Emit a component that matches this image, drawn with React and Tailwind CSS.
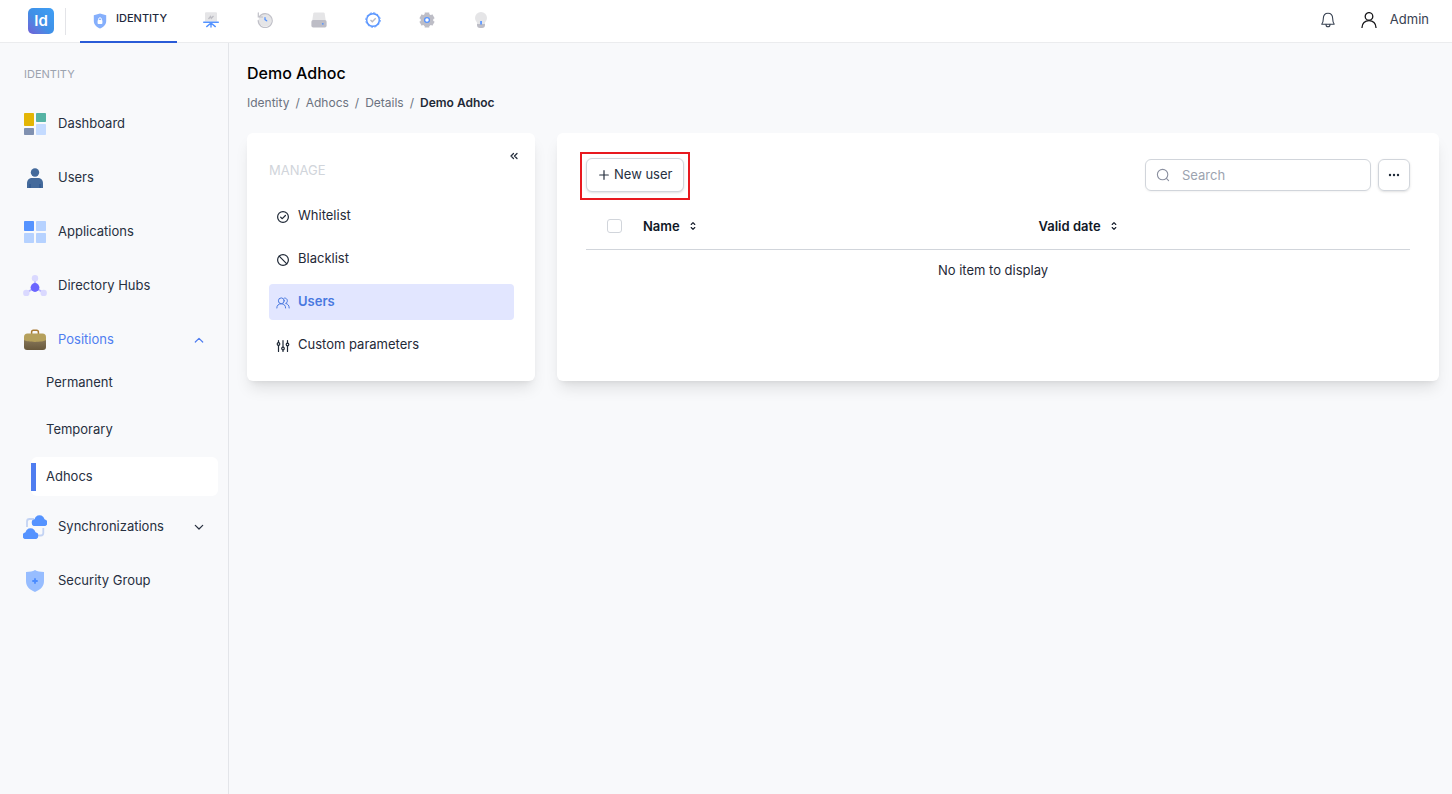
import React from "react";

const stroke = {
  fill: "none",
  stroke: "currentColor",
  strokeLinecap: "round",
  strokeLinejoin: "round",
};

function Logo() {
  return (
    <span className="flex size-[26px] items-center justify-center rounded-[5px] bg-linear-to-tr from-[#6d5fd6] via-[#3f8fe6] via-45% to-[#3f9ff5] text-[15px] font-semibold text-white">
      Id
    </span>
  );
}

function ShieldLockIcon() {
  return (
    <svg width="16" height="16" viewBox="0 0 16 16">
      <path d="M8 .5 L14.200 2.200 V8 C14.200 11.600 11.500 14.200 8 15.600 C4.500 14.200 1.800 11.600 1.800 8 V2.200 Z" fill="#85affc" />
      <rect x="5.600" y="7" width="4.800" height="4" rx=".8" fill="#fff" />
      <path d="M6.600 7.200 V6.200 a1.400 1.400 0 0 1 2.800 0 V7.200" fill="none" stroke="#fff" strokeWidth="1" />
    </svg>
  );
}

function BoardIcon() {
  return (
    <svg width="16" height="16" viewBox="0 0 16 16">
      <path d="M2 1.200 a1 1 0 0 1 1-1 H13 a1 1 0 0 1 1 1 V9.500 H2 Z" fill="#e5e5e7" />
      <path d="M5.500 7 L7.500 4.500 L8.300 6.300 L10.500 4" fill="none" stroke="#bdbdc4" strokeWidth="1.300" />
      <path d="M.7 10.200 H15.300 M8 10.500 V15 M8 11 L3.700 14.600 M8 11 L12.300 14.600" fill="none" stroke="#5593ff" strokeWidth="1.400" strokeLinecap="round" />
    </svg>
  );
}

function HistoryIcon() {
  return (
    <svg width="16" height="16" viewBox="0 0 16 16">
      <circle cx="8.200" cy="8.200" r="6.500" fill="#e5e5e7" />
      <path d="M2.300 4.800 A7 7 0 1 1 1.200 8.400" fill="none" stroke="#c0c0c8" strokeWidth="1.200" strokeLinecap="round" />
      <path d="M1.300 .9 V5 H5.500" fill="none" stroke="#c0c0c8" strokeWidth="1.200" strokeLinecap="round" />
      <path d="M8 5.600 V7.600 L9.700 8.800" fill="none" stroke="#5593ff" strokeWidth="1.300" strokeLinecap="round" />
    </svg>
  );
}

function DriveIcon() {
  return (
    <svg width="16" height="16" viewBox="0 0 16 16">
      <path d="M2.300 1.600 a1.300 1.300 0 0 1 1.200-1.100 H12.500 a1.300 1.300 0 0 1 1.200 1.100 L14.800 9 H1.200 Z" fill="#e5e5e7" />
      <rect x=".4" y="8" width="15.200" height="7.600" rx="1.800" fill="#bdbdc6" />
      <circle cx="11.800" cy="11.800" r=".9" fill="#5593ff" />
    </svg>
  );
}

function VerifiedIcon() {
  return (
    <svg width="16" height="16" viewBox="0 0 16 16">
      <circle cx="8" cy="8" r="6.300" fill="none" stroke="#5593ff" strokeWidth="1.400" />
      <circle cx="8" cy="8" r="7.200" fill="none" stroke="#5593ff" strokeWidth="1" strokeDasharray="2.270 1.500" />
      <path d="M5.500 8 L7.300 9.800 L10.700 6.300" fill="none" stroke="#b9b9c2" strokeWidth="1.400" />
    </svg>
  );
}

function GearIcon() {
  return (
    <svg width="16" height="16" viewBox="0 0 16 16">
      <circle cx="8" cy="8" r="6.300" fill="#bdbdc6" />
      <path
        d="M8 .5V15.500 M1.500 4.250 L14.500 11.750 M14.500 4.250 L1.500 11.750"
        stroke="#bdbdc6"
        strokeWidth="4.600"
      />
      <circle cx="8" cy="8" r="2.400" fill="#fff" stroke="#5593ff" strokeWidth="1.300" />
    </svg>
  );
}

function BulbIcon() {
  return (
    <svg width="16" height="16" viewBox="0 0 16 16">
      <circle cx="8" cy="6" r="6" fill="#e5e5e7" />
      <path d="M4 8 H12 V13 H4 Z" fill="#e5e5e7" />
      <path d="M4 12 H12 V13 a3 3 0 0 1 -3 3 H7 a3 3 0 0 1 -3 -3 Z" fill="#bdbdc6" />
      <rect x="7.200" y="9" width="1.700" height="3.500" fill="#5593ff" />
    </svg>
  );
}

function BellIcon() {
  return (
    <svg width="16" height="16" viewBox="0 0 16 16" {...stroke} strokeWidth="1.100">
      <path d="M1.800 12.200 C3.200 10.800 3.200 9 3.300 6.600 C3.400 3.200 5.400 1.300 8 1.300 C10.600 1.300 12.600 3.200 12.700 6.600 C12.800 9 12.800 10.800 14.200 12.200 Z" />
      <path d="M6 12.400 C6 15.500 10 15.500 10 12.400" />
    </svg>
  );
}

function PersonIcon() {
  return (
    <svg width="16" height="16" viewBox="0 0 16 16" {...stroke} strokeWidth="1.300">
      <circle cx="8" cy="4.400" r="3.800" />
      <path d="M1 15.600 C1 11.400 4 8.600 8 8.600 C12 8.600 15 11.400 15 15.600" />
    </svg>
  );
}

function DashboardIcon() {
  return (
    <svg width="24" height="24" viewBox="0 0 24 24">
      <rect x="1" y="1" width="10" height="13" rx=".8" fill="#e3b505" />
      <rect x="13" y="1" width="10" height="9" rx=".8" fill="#56b3a4" />
      <rect x="1" y="16" width="10" height="7" rx=".8" fill="#8091b0" />
      <rect x="13" y="12" width="10" height="11" rx=".8" fill="#c4dbff" />
    </svg>
  );
}

function UserIcon() {
  return (
    <svg width="24" height="24" viewBox="0 0 24 24">
      <circle cx="12" cy="6.500" r="4.200" fill="#446a9b" />
      <path d="M4 22 V17.500 C4 13.500 6.500 12 9 12 H15 C17.500 12 20 13.500 20 17.500 V22 Z" fill="#446a9b" />
      <path d="M7 18 V22 M17 18 V22" stroke="#2c5590" strokeWidth="1.200" />
    </svg>
  );
}

function AppsIcon() {
  return (
    <svg width="24" height="24" viewBox="0 0 24 24">
      <rect x="1" y="1" width="10" height="10" rx=".8" fill="#5593ff" />
      <rect x="13" y="1" width="10" height="10" rx=".8" fill="#b6d2ff" />
      <rect x="1" y="13" width="10" height="10" rx=".8" fill="#b6d2ff" />
      <rect x="13" y="13" width="10" height="10" rx=".8" fill="#b6d2ff" />
    </svg>
  );
}

function HubsIcon() {
  return (
    <svg width="24" height="24" viewBox="0 0 24 24">
      <path d="M12 4 V13.500 M12 13.500 L3.500 18.800 M12 13.500 L20.500 18.800" stroke="#b9b6ff" strokeWidth="1.800" />
      <circle cx="12" cy="4.200" r="3.200" fill="#dad9ff" />
      <circle cx="3.300" cy="18.900" r="3.200" fill="#dad9ff" />
      <circle cx="20.700" cy="18.900" r="3.200" fill="#dad9ff" />
      <circle cx="12" cy="13.500" r="4.400" fill="#6b66ff" />
    </svg>
  );
}

function BriefcaseIcon() {
  return (
    <svg width="24" height="24" viewBox="0 0 24 24">
      <defs>
        <linearGradient id="case-body" x1="0" y1="0" x2="0" y2="1">
          <stop offset="0" stopColor="#8a7a5c" />
          <stop offset="1" stopColor="#68583c" />
        </linearGradient>
      </defs>
      <path d="M8.600 6 V4 a1.800 1.800 0 0 1 1.800-1.800 h3.200 a1.800 1.800 0 0 1 1.800 1.800 V6" fill="none" stroke="#a97b33" strokeWidth="1.500" />
      <path d="M1 10 H23 V19 a3 3 0 0 1 -3 3 H4 a3 3 0 0 1 -3 -3 Z" fill="url(#case-body)" />
      <path d="M1 12 V9 a3.500 3.500 0 0 1 3.500-3.500 H19.500 a3.500 3.500 0 0 1 3.500 3.500 V12 C20 14.500 4 14.500 1 12 Z" fill="#b5a05c" />
    </svg>
  );
}

function CloudSyncIcon() {
  return (
    <svg width="24" height="24" viewBox="0 0 24 24">
      <path d="M4 12 V6.500 a2.500 2.500 0 0 1 2.500-2.500 H11 M20.300 13 V18 a2.500 2.500 0 0 1 -2.500 2.500 H14" fill="none" stroke="#c3d3f3" strokeWidth="1.800" />
      <g fill="#5593ff">
        <path d="M12.200 11 a3.200 3.200 0 0 1 -.5 -6.400 a5 5 0 0 1 9.600 0 a3.200 3.200 0 0 1 -.5 6.400 Z" />
        <circle cx="12.200" cy="7.800" r="3.200" />
        <circle cx="20.800" cy="7.800" r="3.200" />
        <circle cx="16.500" cy="5.200" r="5" />
        <path d="M3.200 24 a3.200 3.200 0 0 1 -.5 -6.400 a5 5 0 0 1 9.600 0 a3.200 3.200 0 0 1 -.5 6.400 Z" />
        <circle cx="3.200" cy="20.800" r="3.200" />
        <circle cx="11.800" cy="20.800" r="3.200" />
        <circle cx="7.500" cy="18.200" r="5" />
      </g>
    </svg>
  );
}

function ShieldPlusIcon() {
  return (
    <svg width="24" height="24" viewBox="0 0 24 24">
      <path d="M12 1 C14.500 2.500 17 2.800 21 3 V12 C21 17.500 17.500 20.600 12 23 C6.500 20.600 3 17.500 3 12 V3 C7 2.800 9.500 2.500 12 1 Z" fill="#97bdff" />
      <path d="M12 9.300 V14.700 M9.300 12 H14.700" stroke="#4a8bff" strokeWidth="1.800" />
    </svg>
  );
}

function Chevron({ up }) {
  return (
    <svg width="10" height="10" viewBox="0 0 10 10" {...stroke} strokeWidth="1.200">
      <path d={up ? "M1.300 7 L5 3.300 L8.700 7" : "M1.300 3.300 L5 7 L8.700 3.300"} />
    </svg>
  );
}

function CheckCircleIcon() {
  return (
    <svg width="14" height="14" viewBox="0 0 14 14" {...stroke} strokeWidth="1.200">
      <circle cx="7" cy="7" r="5.400" />
      <path d="M4.600 7.100 L6.300 8.700 L9.400 5.500" />
    </svg>
  );
}

function BanIcon() {
  return (
    <svg width="14" height="14" viewBox="0 0 14 14" {...stroke} strokeWidth="1.200">
      <circle cx="7" cy="7" r="5.400" />
      <path d="M3.200 3.200 L10.800 10.800" />
    </svg>
  );
}

function GroupIcon() {
  return (
    <svg width="14" height="14" viewBox="0 0 14 14" {...stroke} strokeWidth="1">
      <circle cx="5.300" cy="4.800" r="2.900" />
      <path d="M.8 12 C.8 9.300 2.600 7.800 5.300 7.800 C8 7.800 9.600 9.300 9.600 12" />
      <path d="M8.600 2 C12 2 12.200 6.500 9.600 7.400 C12 8 13.200 9.500 13.200 12" />
    </svg>
  );
}

function SlidersIcon() {
  return (
    <svg width="14" height="14" viewBox="0 0 14 14" {...stroke} strokeWidth="1.200">
      <path d="M2.500 1.500 V3.500 M2.500 6.500 V12.500 M7 1.500 V8 M7 11 V12.500 M11.500 1.500 V4 M11.500 7 V12.500" />
      <circle cx="2.500" cy="5" r="1.300" />
      <circle cx="7" cy="9.500" r="1.300" />
      <circle cx="11.500" cy="5.500" r="1.300" />
    </svg>
  );
}

function SortIcon() {
  return (
    <svg width="6" height="10" viewBox="0 0 6 10" {...stroke} strokeWidth="1.100">
      <path d="M1.200 3.500 L3 1.700 L4.800 3.500 M1.200 6.500 L3 8.300 L4.800 6.500" />
    </svg>
  );
}

const modules = [
  ["Network", BoardIcon],
  ["History", HistoryIcon],
  ["Storage", DriveIcon],
  ["Compliance", VerifiedIcon],
  ["Settings", GearIcon],
  ["Insights", BulbIcon],
];

const upperItems = [
  ["Dashboard", DashboardIcon],
  ["Users", UserIcon],
  ["Applications", AppsIcon],
  ["Directory Hubs", HubsIcon],
];

const manageItems = [
  ["Whitelist", CheckCircleIcon],
  ["Blacklist", BanIcon],
  ["Users", GroupIcon],
  ["Custom parameters", SlidersIcon],
];

function TopBar() {
  return (
    <header className="flex h-[43px] items-center border-b border-[#ebecee] bg-white pr-[23px] pl-7">
      <a href="#home" aria-label="Home">
        <Logo />
      </a>
      <span className="ml-[11px] h-[27px] w-px bg-[#e3e4e8]" />
      <nav className="ml-3.5 flex items-stretch self-stretch" aria-label="Modules">
        <a
          href="#identity"
          className="-mb-px flex items-center gap-2 border-b-2 border-[#2a5bd7] px-3 pr-2.5 text-[11px] font-medium text-[#1e293b]"
        >
          <ShieldLockIcon />
          <span className="-mt-1">IDENTITY</span>
        </a>
        <div className="ml-[26px] flex items-center gap-[38px] pb-[3px]">
          {modules.map(([name, Icon]) => (
            <a key={name} href={"#" + name.toLowerCase()} aria-label={name}>
              <Icon />
            </a>
          ))}
        </div>
      </nav>
      <div className="ml-auto flex items-center gap-[25px] pb-0.5">
        <button type="button" aria-label="Notifications" className="text-[#374151]">
          <BellIcon />
        </button>
        <button type="button" className="flex items-center gap-[13px] text-[13px] text-[#374151]">
          <span className="text-[#18181b]"><PersonIcon /></span>
          Admin
        </button>
      </div>
    </header>
  );
}

function NavRow({ name, Icon }) {
  return (
    <li>
      <a href={"#" + name.toLowerCase().replace(" ", "-")} className="flex h-[54px] items-center gap-[11px]">
        <Icon />
        {name}
      </a>
    </li>
  );
}

function Sidebar() {
  return (
    <aside className="w-[229px] shrink-0 border-r border-[#e3e5e9] pt-[23px] text-[13px] text-[#27303f]">
      <h2 className="pl-6 text-[11px] leading-4 text-[#9ca3af]">IDENTITY</h2>
      <ul className="mt-[15px] pl-[23px]">
        {upperItems.map(([name, Icon]) => (
          <NavRow key={name} name={name} Icon={Icon} />
        ))}
        <li>
          <button type="button" aria-expanded="true" className="flex h-[54px] w-full items-center gap-[11px] pr-6 text-[#4f7df0]">
            <BriefcaseIcon />
            Positions
            <span className="ml-auto"><Chevron up /></span>
          </button>
          <ul className="-mt-1 mb-1 flex flex-col gap-2 pr-2.5 pl-2">
            <li><a href="#permanent" className="flex h-[39px] items-center pl-[15px]">Permanent</a></li>
            <li><a href="#temporary" className="flex h-[39px] items-center pl-[15px]">Temporary</a></li>
            <li>
              <a href="#adhocs" aria-current="page" className="flex h-[39px] items-center gap-2.5 rounded-md bg-white">
                <span className="h-7 w-[5px] bg-[#4f7df0]" />
                Adhocs
              </a>
            </li>
          </ul>
        </li>
        <li>
          <button type="button" aria-expanded="false" className="flex h-[54px] w-full items-center gap-[11px] pr-6">
            <CloudSyncIcon />
            Synchronizations
            <span className="ml-auto"><Chevron /></span>
          </button>
        </li>
        <NavRow name="Security Group" Icon={ShieldPlusIcon} />
      </ul>
    </aside>
  );
}

function ManagePanel() {
  return (
    <section className="w-72 shrink-0 rounded-md bg-white pt-[15px] pr-[21px] pb-[18px] pl-[22px] shadow-lg">
      <div className="-mr-2 flex h-3.5 justify-end">
        <button type="button" aria-label="Collapse" className="flex size-4 items-center justify-center text-[#27303f]">
          <svg width="8" height="8" viewBox="0 0 8 8" {...stroke} strokeWidth="1.300">
            <path d="M3.500 1.500 L1 4 L3.500 6.500 M7 1.500 L4.500 4 L7 6.500" />
          </svg>
        </button>
      </div>
      <h2 className="text-[13px] leading-4 text-[#d1d5db]">MANAGE</h2>
      <ul className="mt-5 flex flex-col gap-[7px] text-[13px] text-[#1f2937]">
        {manageItems.map(([name, Icon]) => (
          <li key={name}>
            <a
              href={"#manage-" + name.toLowerCase().replace(" ", "-")}
              className={
                name === "Users"
                  ? "flex h-9 items-center gap-2 rounded-sm bg-[#e2e6ff] pl-[7px] font-semibold text-[#4878e0]"
                  : "flex h-9 items-center gap-2 rounded-sm pl-[7px]"
              }
            >
              <span className="pt-0.5"><Icon /></span>
              {name}
            </a>
          </li>
        ))}
      </ul>
    </section>
  );
}

function UsersPanel() {
  return (
    <section className="min-w-0 flex-1 rounded-md bg-white px-[29px] pt-[25px] shadow-lg">
      <div className="flex items-center justify-between text-[13px]">
        <div className="relative">
          <button
            type="button"
            className="flex h-[34px] items-center gap-[5px] rounded-md border border-[#d1d5db] bg-white pr-[11px] pl-3 text-[#27303f] shadow-sm"
          >
            <svg width="10" height="10" viewBox="0 0 10 10" {...stroke} strokeWidth="1.200">
              <path d="M5 .7 V9.300 M.7 5 H9.300" />
            </svg>
            New user
          </button>
          <span className="pointer-events-none absolute -inset-x-1.5 -top-1.5 -bottom-2 border-2 border-[#e8191f]" />
        </div>
        <div className="flex gap-[7px]">
          <div className="flex h-8 w-[226px] items-center gap-3 rounded-md border border-[#d1d5db] px-2.5 shadow-xs">
            <svg width="14" height="14" viewBox="0 0 14 14" {...stroke} strokeWidth="1.100" className="shrink-0 text-[#8b90a0]">
              <circle cx="6.600" cy="6.600" r="5.200" />
              <path d="M10.400 10.400 L12.600 12.600" />
            </svg>
            <input
              type="search"
              aria-label="Search"
              placeholder="Search"
              className="h-full w-full min-w-0 bg-transparent outline-none placeholder:text-[#9ca3af]"
            />
          </div>
          <button type="button" aria-label="More options" className="flex size-8 items-center justify-center rounded-md border border-[#d1d5db] shadow-sm">
            <svg width="12" height="4" viewBox="0 0 12 4" fill="#1f2937">
              <circle cx="2" cy="2" r="1.200" />
              <circle cx="6" cy="2" r="1.200" />
              <circle cx="10" cy="2" r="1.200" />
            </svg>
          </button>
        </div>
      </div>
      <table className="mt-3 w-full table-fixed text-left text-[13px]">
        <thead>
          <tr className="h-[45px] border-b border-[#d1d5db] text-[#111827]">
            <th className="w-[57px] pl-[21px]">
              <input
                type="checkbox"
                aria-label="Select all"
                className="block h-3.5 w-[15px] appearance-none rounded-[3px] border border-[#d1d5db] bg-white"
              />
            </th>
            {["Name", "Valid date"].map((label) => (
              <th key={label} className={label === "Name" ? "w-[48%] font-semibold" : "font-semibold"}>
                <button type="button" className="flex items-center gap-2.5">
                  {label}
                  <SortIcon />
                </button>
              </th>
            ))}
          </tr>
        </thead>
        <tbody>
          <tr>
            <td colSpan={3} className="h-[42px] pr-2.5 text-center text-[#1f2937]">No item to display</td>
          </tr>
        </tbody>
      </table>
    </section>
  );
}

export default function App() {
  return (
    <div className="flex min-h-screen flex-col bg-[#f8f9fb] font-['Inter',sans-serif]">
      <TopBar />
      <div className="flex flex-1">
        <Sidebar />
        <main className="min-w-0 flex-1 pt-[18px] pr-[13px] pl-[18px]">
          <h1 className="text-base font-medium text-black">Demo Adhoc</h1>
          <nav aria-label="Breadcrumb" className="mt-2">
            <ol className="flex gap-1.5 text-[12px] leading-5 text-[#6b7280]">
              <li><a href="#identity">Identity</a></li>
              <li aria-hidden="true">/</li>
              <li><a href="#adhocs">Adhocs</a></li>
              <li aria-hidden="true">/</li>
              <li><a href="#details">Details</a></li>
              <li aria-hidden="true">/</li>
              <li aria-current="page" className="font-semibold text-[#1f2937]">Demo Adhoc</li>
            </ol>
          </nav>
          <div className="mt-5 flex items-stretch gap-[22px]">
            <ManagePanel />
            <UsersPanel />
          </div>
        </main>
      </div>
    </div>
  );
}
